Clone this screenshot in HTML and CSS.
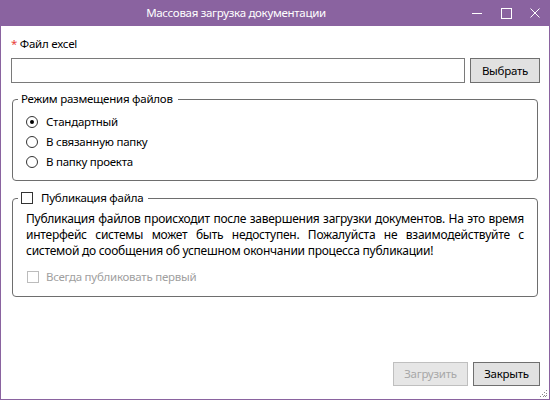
FILE: index.html
```html
<!DOCTYPE html>
<html lang="ru">
<head>
<meta charset="utf-8">
<title>Массовая загрузка документации</title>
<link rel="stylesheet" href="styles.css">
</head>
<body>
<div class="window">
  <div class="titlebar">
    <div class="title">Массовая загрузка документации</div>
    <div class="controls">
      <span class="ctl"><svg width="12" height="12" viewBox="0 0 12 12"><path d="M1 6.5h10" stroke="#fff" stroke-width="1"/></svg></span>
      <span class="ctl"><svg width="12" height="12" viewBox="0 0 12 12"><rect x="1.5" y="1.5" width="10" height="10" fill="none" stroke="#fff" stroke-width="1"/></svg></span>
      <span class="ctl"><svg width="12" height="12" viewBox="0 0 12 12"><path d="M1.5 1.5l9 9M10.5 1.5l-9 9" stroke="#fff" stroke-width="1"/></svg></span>
    </div>
  </div>
  <div class="content">
    <div class="label"><span class="req">*</span> Файл excel</div>
    <div class="filerow">
      <div class="input"></div>
      <div class="btn btn-pick">Выбрать</div>
    </div>
    <fieldset class="group group-mode">
      <legend class="legend">Режим размещения файлов</legend>
      <div class="radio-row"><span class="radio checked"></span><span>Стандартный</span></div>
      <div class="radio-row"><span class="radio"></span><span>В связанную папку</span></div>
      <div class="radio-row"><span class="radio"></span><span>В папку проекта</span></div>
    </fieldset>
    <fieldset class="group group-pub">
      <legend class="legend legend-check"><span class="check"></span><span>Публикация файла</span></legend>
      <p class="note">
        <span class="line">Публикация файлов происходит после завершения загрузки документов. На это время</span>
        <span class="line">интерфейс системы может быть недоступен. Пожалуйста не взаимодействуйте с</span>
        <span class="line last">системой до сообщения об успешном окончании процесса публикации!</span>
      </p>
      <div class="check-row disabled"><span class="check"></span><span>Всегда публиковать первый</span></div>
    </fieldset>
    <div class="footer">
      <div class="btn btn-upload disabled">Загрузить</div>
      <div class="btn btn-close">Закрыть</div>
    </div>
  </div>
  <svg class="grip" width="8" height="8" viewBox="0 0 8 8">
    <g fill="#8a8a8a">
      <rect x="6" y="0" width="1" height="1"/><rect x="4" y="2" width="1" height="1"/><rect x="2" y="4" width="1" height="1"/><rect x="0" y="6" width="1" height="1"/>
      <rect x="6" y="3" width="1" height="1"/><rect x="4" y="5" width="1" height="1"/><rect x="3" y="6" width="1" height="1"/>
      <rect x="6" y="5" width="1" height="1"/><rect x="5" y="6" width="1" height="1"/>
    </g>
  </svg>
</div>
</body>
</html>
```
FILE: styles.css
```css
* { box-sizing: border-box; }
html, body { margin: 0; padding: 0; background: #fff; }
body {
  font-family: "Noto Sans", "Open Sans", sans-serif;
  font-size: 11.5px;
  letter-spacing: -0.25px;
  line-height: 16px;
  color: #000;
}
.window {
  position: relative;
  width: 550px;
  height: 400px;
  border: 1px solid #8a63a0;
  border-top: none;
  display: flex;
  flex-direction: column;
  background: #fff;
}
.titlebar {
  height: 26px;
  margin: 0 -1px;
  background: #8a63a0;
  color: #fff;
  display: flex;
  align-items: center;
}
.title {
  flex: 1;
  text-align: center;
  padding-left: 12px;
  letter-spacing: -0.3px;
}
.controls {
  display: flex;
  align-items: center;
  gap: 17px;
  padding-right: 9px;
  width: 90px;
  height: 26px;
  justify-content: flex-end;
}
.ctl { display: flex; width: 12px; height: 12px; }
.content {
  flex: 1;
  display: flex;
  flex-direction: column;
  padding: 10px 9px 13px 10px;
}
.req { color: #e8413a; }
.label { height: 16px; }
.filerow {
  display: flex;
  gap: 5px;
  margin-top: 6px;
  height: 25px;
}
.input {
  flex: 1;
  border: 1px solid #7a7a7a;
  background: #fff;
}
.btn {
  display: flex;
  align-items: center;
  justify-content: center;
  background: #e1e1e1;
  border: 1px solid #6f6f6f;
}
.btn-pick { width: 70px; }
.group {
  margin: 0 2px 0 1px;
  border: 1px solid #6e6e6e;
  border-radius: 4px;
  min-width: 0;
}
.legend {
  padding: 0 5px 0 3px;
  margin-left: -8px;
  line-height: 16px;
  display: flex;
  align-items: center;
}
.group-mode {
  margin-top: 8px;
  padding: 5px 13px 8px 13px;
}
.radio-row {
  display: flex;
  align-items: center;
  height: 20px;
  gap: 8px;
}
.radio {
  width: 12px;
  height: 12px;
  border: 1px solid #333;
  border-radius: 50%;
  display: flex;
  align-items: center;
  justify-content: center;
  flex: none;
}
.radio.checked::after {
  content: "";
  width: 4px;
  height: 4px;
  border-radius: 50%;
  background: #000;
}
.group-pub {
  margin-top: 9px;
  padding: 5px 13px 9px 13px;
}
.legend-check { gap: 8px; }
.check {
  width: 12px;
  height: 12px;
  border: 1px solid #333;
  background: #fff;
  flex: none;
}
.note {
  margin: 0;
  font-size: 12px;
}
.line {
  display: block;
  white-space: nowrap;
  text-align: justify;
  text-align-last: justify;
}
.line.last { text-align-last: left; }
.check-row {
  display: flex;
  align-items: center;
  height: 20px;
  margin-top: 8px;
  gap: 7px;
  padding-left: 1px;
}
.check-row.disabled { color: #a0a0a0; }
.check-row.disabled .check { border-color: #bcbcbc; }
.footer {
  margin-top: auto;
  display: flex;
  justify-content: flex-end;
  gap: 5px;
  height: 24px;
}
.btn-upload { width: 75px; }
.btn-close { width: 67px; }
.btn.disabled {
  color: #a8a8a8;
  background: #e6e6e6;
  border-color: #bfbfbf;
}
.grip {
  position: absolute;
  right: 1px;
  bottom: 1px;
}
```
